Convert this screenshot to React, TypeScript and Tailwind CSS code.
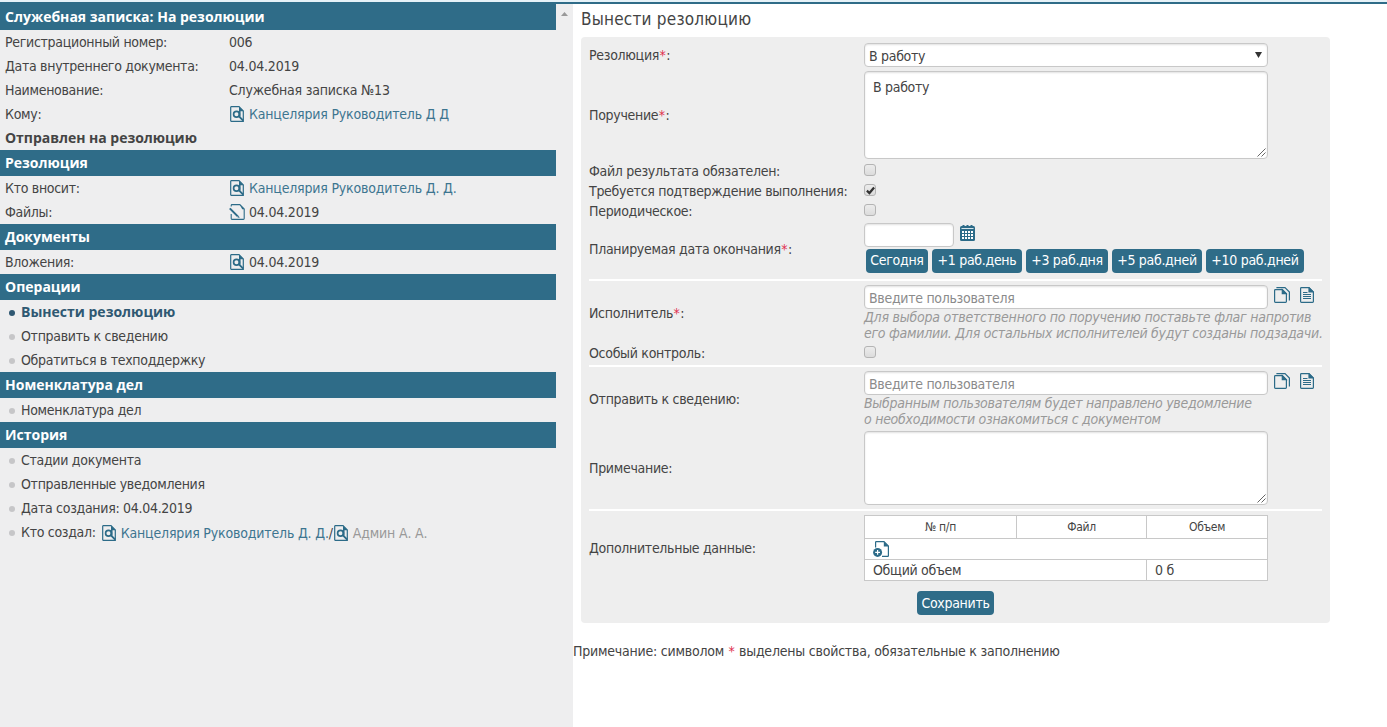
import React from "react";

type Text = { children: React.ReactNode; className?: string };

const BLUE = "#2c6b88";

function SearchDoc() {
  return (
    <svg width="15" height="16" viewBox="-1 0 15 16" className="shrink-0" fill="none">
      <path d="M9 .7H1.2Q.7 .7 .7 1.2V14.8Q.7 15.3 1.2 15.3H13.3V5L9 .7Z" stroke={BLUE} strokeWidth="1.2" />
      <path d="M9 .4L13.8 5.2H9Z" fill={BLUE} />
      <circle cx="6.5" cy="8.2" r="2.9" stroke={BLUE} strokeWidth="1.7" />
      <path d="M9.6 5V10.8M9 10.4L13.2 14.6" stroke={BLUE} strokeWidth="1.9" />
    </svg>
  );
}

function EditDoc() {
  return (
    <svg width="16" height="16" viewBox="0 0 16 16" className="-mr-px shrink-0" fill="none">
      <path d="M2.2 2.4V1.4Q2.2 .6 3 .6H10.8L15.2 5V14.6Q15.2 15.4 14.4 15.4H3Q2.2 15.4 2.2 14.6V10" stroke={BLUE} strokeWidth="1.1" />
      <path d="M10.8 .4L15.6 5.2H13.2Z" fill={BLUE} />
      <path d="M.8 4.4L8.8 12.4" stroke={BLUE} strokeWidth="2" />
      <path d="M8.4 13.2L10.6 14L9.8 11.8Z" fill={BLUE} />
    </svg>
  );
}

function CopyDoc() {
  return (
    <svg width="16" height="16" viewBox="0 0 16 16" className="shrink-0" fill="none" stroke={BLUE} strokeWidth="1.2">
      <path d="M8.3 2.6H1.4Q.6 2.6 .6 3.4V14.6Q.6 15.4 1.4 15.4H11.6Q12.4 15.4 12.4 14.6V6.7Z" />
      <path d="M8.3 2.8V6.7H12.2Z" fill={BLUE} />
      <path d="M2.4 .6H11L15.4 5V13.4" />
    </svg>
  );
}

function TextDoc() {
  return (
    <svg width="14" height="16" viewBox="0 0 14 16" className="shrink-0" fill="none" stroke={BLUE} strokeWidth="1.2">
      <path d="M9 .6H1.4Q.6 .6 .6 1.4V14.6Q.6 15.4 1.4 15.4H12.6Q13.4 15.4 13.4 14.6V5Z" />
      <path d="M9 .8V5H13.2Z" fill={BLUE} />
      <path d="M3 5.5H7.5M3 7.5H11M3 9.5H11M3 11.5H11" strokeWidth="1.1" />
    </svg>
  );
}

function AddDoc() {
  return (
    <svg width="16" height="16" viewBox="0 0 16 16" className="shrink-0" fill="none">
      <path d="M2.6 6.5V1.2Q2.6 .6 3.2 .6H11L15.4 5V14.8Q15.4 15.4 14.8 15.4H9" stroke={BLUE} strokeWidth="1.2" />
      <path d="M10.8 .4L15.8 5.4H10.8Z" fill={BLUE} />
      <circle cx="4.6" cy="11.4" r="4.5" fill={BLUE} />
      <path d="M2.2 11.4H7M4.6 9V13.8" stroke="white" strokeWidth="1.2" />
    </svg>
  );
}

function Calendar() {
  return (
    <svg width="15" height="16" viewBox="0 0 15 16" className="shrink-0">
      <rect y="1" width="15" height="15" rx="1.5" fill={BLUE} />
      <path d="M2.5 0h2v2h-2zM6.5 0h2v2h-2zM10.5 0h2v2h-2z" fill={BLUE} />
      <path d="M1.5 3.5H13.5" stroke="#d8e6ec" strokeWidth="1" />
      <path d="M2 6h2v2H2zM5 6h2v2H5zM8 6h2v2H8zM11 6h2v2h-2zM2 9h2v2H2zM5 9h2v2H5zM8 9h2v2H8zM11 9h2v2h-2zM2 12h2v2H2zM5 12h2v2H5zM8 12h2v2H8zM11 12h2v2h-2z" fill="white" />
    </svg>
  );
}

function Grip() {
  return (
    <svg width="9" height="9" viewBox="0 0 9 9" className="absolute right-px bottom-px" stroke="#555" strokeWidth=".9">
      <path d="M.5 8.5L8.5 .5M4.5 8.5L8.5 4.5" />
    </svg>
  );
}

function Header({ children }: Text) {
  return (
    <h2 className="flex h-[26px] w-[556px] items-center bg-[#2f6c88] pl-[5px] font-['Open_Sans',sans-serif] text-sm font-bold tracking-normal text-white">
      {children}
    </h2>
  );
}

function Field({ label, children }: { label: string; children?: React.ReactNode }) {
  return (
    <div className="flex h-6 items-center pl-[5px]">
      <span className="w-[224px]">{label}</span>
      <span className="flex items-center gap-[5px] tracking-[-0.2px]">{children}</span>
    </div>
  );
}

function Item({ children, active }: Text & { active?: boolean }) {
  return (
    <li className={active ? "flex h-6 items-center pl-[9px] font-['Open_Sans',sans-serif] font-bold tracking-normal text-[#2f5872]" : "flex h-6 items-center pl-[9px]"}>
      <span className={active ? "mt-0.5 mr-1.5 size-1.5 rounded-full bg-[#2f5872]" : "mt-0.5 mr-1.5 size-1.5 rounded-full bg-[#c6c6c8]"} />
      {children}
    </li>
  );
}

function Star() {
  return <span className="px-[0.5px] tracking-normal text-[#e0304e]">*</span>;
}

function Row({ label, required, className, children }: { label: string; required?: boolean; className: string; children: React.ReactNode }) {
  return (
    <div className={"flex items-center " + className}>
      <div className="w-[275px] shrink-0">
        {label}
        {required && <Star />}:
      </div>
      <div className="grow">{children}</div>
    </div>
  );
}

function Check({ checked }: { checked?: boolean }) {
  return (
    <span className="-mt-0.5 flex size-3 items-center justify-center rounded-[3px] border border-[#b4b4b4] bg-linear-to-b from-[#ececec] to-[#dcdcdc]">
      {checked && (
        <svg width="9" height="9" viewBox="0 0 10 10" className="shrink-0" fill="none" stroke="#333" strokeWidth="2.5">
          <path d="M1 5.2L3.8 7.8L9 1.6" />
        </svg>
      )}
    </span>
  );
}

function Btn({ children, className }: Text) {
  return (
    <button className={"h-6 shrink-0 rounded bg-[#2f6c88] text-center whitespace-nowrap text-white " + className}>{children}</button>
  );
}

const box = "rounded-[4px] border border-[#c8c8c8] bg-white shadow-[inset_0_1px_2px_rgba(0,0,0,0.12)]";

function Area({ className, children }: { className: string; children?: React.ReactNode }) {
  return (
    <div className={"relative w-[404px] px-2 py-[7px] leading-4 " + box + " " + className}>
      {children}
      <Grip />
    </div>
  );
}

function UserInput() {
  return (
    <div className="flex items-start">
      <div className={"flex h-6 w-[404px] items-center pt-0.5 pl-1 text-[#8b8b8b] " + box}>Введите пользователя</div>
      <span className="mt-0.5 ml-1.5 flex gap-2.5">
        <CopyDoc />
        <TextDoc />
      </span>
    </div>
  );
}

function Rule() {
  return <hr className="my-0.5 h-0.5 border-0 bg-white" />;
}

export default function App() {
  return (
    <div className="flex h-[727px] w-[1387px] flex-col overflow-hidden bg-white font-['DejaVu_Sans_Condensed','DejaVu_Sans',sans-serif] text-sm tracking-[-0.3px] text-[#444]">
      <div className="h-0.5 shrink-0 bg-[#e6f2f8]" />
      <div className="h-0.5 shrink-0 bg-[#2f6c88]" />
      <div className="flex grow">
        <aside className="flex w-[573px] shrink-0 bg-[#eeeeef]">
          <div className="w-[556px]">
            <Header>Служебная записка: На резолюции</Header>
            <Field label="Регистрационный номер:">006</Field>
            <Field label="Дата внутреннего документа:">04.04.2019</Field>
            <Field label="Наименование:">Служебная записка №13</Field>
            <Field label="Кому:">
              <SearchDoc />
              <span className="text-[#3d7590]">Канцелярия Руководитель Д Д</span>
            </Field>
            <div className="flex h-6 items-center pl-[5px] font-['Open_Sans',sans-serif] font-bold tracking-[-0.03px]">Отправлен на резолюцию</div>
            <Header>Резолюция</Header>
            <Field label="Кто вносит:">
              <SearchDoc />
              <span className="text-[#3d7590]">Канцелярия Руководитель Д. Д.</span>
            </Field>
            <Field label="Файлы:">
              <EditDoc />
              04.04.2019
            </Field>
            <Header>Документы</Header>
            <Field label="Вложения:">
              <SearchDoc />
              04.04.2019
            </Field>
            <Header>Операции</Header>
            <ul>
              <Item active>Вынести резолюцию</Item>
              <Item>Отправить к сведению</Item>
              <Item>Обратиться в техподдержку</Item>
            </ul>
            <Header>Номенклатура дел</Header>
            <ul>
              <Item>Номенклатура дел</Item>
            </ul>
            <Header>История</Header>
            <ul>
              <Item>Стадии документа</Item>
              <Item>Отправленные уведомления</Item>
              <Item>Дата создания: 04.04.2019</Item>
              <Item>
                <span className="mr-[5px]">Кто создал:</span>
                <span className="flex items-center pt-0.5 tracking-[-0.18px]">
                  <SearchDoc />
                  <span className="ml-[5px] text-[#3d7590]">Канцелярия Руководитель Д. Д.</span>/
                  <SearchDoc />
                  <span className="ml-[5px] text-[#999]">Админ А. А.</span>
                </span>
              </Item>
            </ul>
          </div>
          <div className="flex w-[17px] justify-center pt-2">
            <svg width="7" height="4" viewBox="0 0 7 4" fill="#999">
              <path d="M0 4L3.5 0L7 4Z" />
            </svg>
          </div>
        </aside>
        <main>
          <h1 className="flex h-[33px] items-center pb-[3px] pl-2 text-[17px] tracking-[0.22px]">Вынести резолюцию</h1>
          <section className="ml-2 h-[586px] w-[749px] rounded bg-[#eeeeee] px-2 pt-1">
            <Row label="Резолюция" required className="h-7">
              <div className={"flex h-6 w-[404px] items-center justify-between pr-[5px] pl-1 " + box}>
                <span className="pt-0.5">В работу</span>
                <svg width="7" height="6" viewBox="0 0 7 6" fill="#333">
                  <path d="M0 0H7L3.5 6Z" />
                </svg>
              </div>
            </Row>
            <Row label="Поручение" required className="h-[92px]">
              <Area className="h-[88px]">В работу</Area>
            </Row>
            <Row label="Файл результата обязателен" className="h-5">
              <Check />
            </Row>
            <Row label="Требуется подтверждение выполнения" className="h-5">
              <Check checked />
            </Row>
            <Row label="Периодическое" className="h-5">
              <Check />
            </Row>
            <Row label="Планируемая дата окончания" required className="h-14">
              <div className="flex items-start gap-1.5">
                <div className={"h-6 w-[90px] " + box} />
                <span className="mt-0.5 flex">
                  <Calendar />
                </span>
              </div>
              <div className="mt-0.5 ml-0.5 flex gap-1 pb-0.5">
                <Btn className="w-[62px] pb-[3px]">Сегодня</Btn>
                <Btn className="w-[90px] pb-[3px]">+1 раб.день</Btn>
                <Btn className="w-[82px] pb-[3px]">+3 раб.дня</Btn>
                <Btn className="w-[90px] pb-[3px]">+5 раб.дней</Btn>
                <Btn className="w-[98px] pb-[3px]">+10 раб.дней</Btn>
              </div>
            </Row>
            <Rule />
            <Row label="Исполнитель" required className="h-[60px]">
              <UserInput />
              <p className="leading-4 tracking-[-0.26px] whitespace-nowrap text-[#999] italic">
                <span className="tracking-[-0.22px]">Для выбора ответственного по поручению поставьте флаг напротив</span>
                <br />
                его фамилии. Для остальных исполнителей будут созданы подзадачи.
              </p>
            </Row>
            <Row label="Особый контроль" className="h-5">
              <Check />
            </Row>
            <Rule />
            <Row label="Отправить к сведению" className="h-[60px]">
              <UserInput />
              <p className="leading-4 tracking-[-0.27px] whitespace-nowrap text-[#999] italic">
                Выбранным пользователям будет направлено уведомление
                <br />о необходимости ознакомиться с документом
              </p>
            </Row>
            <Row label="Примечание" className="h-[78px]">
              <Area className="h-[74px]" />
            </Row>
            <Rule />
            <Row label="Дополнительные данные" className="h-[70px]">
              <table className="w-[404px] table-fixed border-collapse bg-white leading-4 [&_td]:border [&_td]:border-[#c8c8c8] [&_th]:border [&_th]:border-[#c8c8c8]">
                <colgroup>
                  <col className="w-[152px]" />
                  <col className="w-[130px]" />
                  <col />
                </colgroup>
                <thead className="text-xs">
                  <tr className="h-[23px]">
                    <th className="font-normal">№ п/п</th>
                    <th className="font-normal">Файл</th>
                    <th className="font-normal">Объем</th>
                  </tr>
                </thead>
                <tbody>
                  <tr className="h-[21px]">
                    <td colSpan={3} className="pl-2">
                      <AddDoc />
                    </td>
                  </tr>
                  <tr className="h-[21px]">
                    <td colSpan={2} className="pl-2">Общий объем</td>
                    <td className="pl-2">0 б</td>
                  </tr>
                </tbody>
              </table>
            </Row>
            <div className="flex justify-center pt-2">
              <Btn className="w-[77px] pb-px">Сохранить</Btn>
            </div>
          </section>
          <p className="mt-[18px] leading-5 tracking-[-0.22px]">
            Примечание: символом <Star /> выделены свойства, обязательные к заполнению
          </p>
        </main>
      </div>
    </div>
  );
}
